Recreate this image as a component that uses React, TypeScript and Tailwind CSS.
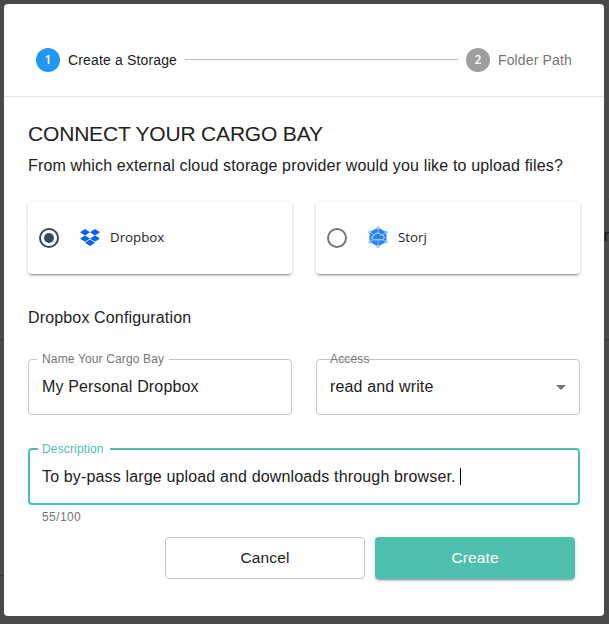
import type { ReactNode } from "react";

function Step({ n, label, active = false }: { n: number; label: string; active?: boolean }) {
  return (
    <div className="flex items-center gap-2">
      <span
        className={`flex h-6 w-6 items-center justify-center rounded-full font-['Open_Sans',sans-serif] text-xs font-semibold text-white ${
          active ? "bg-[#2196f3]" : "bg-[#9e9e9e]"
        }`}
      >
        {n}
      </span>
      <span
        className={`whitespace-nowrap text-sm leading-5 tracking-[0.15px] ${active ? "text-[#212121]" : "text-[#757575]"}`}
      >
        {label}
      </span>
    </div>
  );
}

function DropboxLogo() {
  return (
    <svg className="h-[17px] w-5" viewBox="0 0 20 17" fill="#0061ff">
      <path d="M5 0l5 3.2-5 3.2-5-3.2zM15 0l5 3.2-5 3.2-5-3.2zM5 6.4l5 3.2-5 3.2-5-3.2zM15 6.4l5 3.2-5 3.2-5-3.2zM5 13.8l5-3.2 5 3.2-5 3.2z" />
    </svg>
  );
}

function StorjLogo() {
  return (
    <svg className="h-[22px] w-5" viewBox="0 0 20 22">
      <path d="M10 1.500l8.500 4.700v9.600L10 20.500l-8.500-4.700V6.200z" fill="#2683ff" />
      <path
        d="M10 1.500v6M1.500 6.200l5 3M18.500 6.200l-5 3M1.500 15.800l4-2.300M18.500 15.800l-4-2.300M10 14v6.500"
        stroke="#a8d0ff"
        strokeWidth="0.8"
      />
      <path
        d="M5.500 13.800a2.200 2.200 0 01.4-4.300 3.800 3.800 0 016.800-.6 2.500 2.500 0 011.800 4.900z"
        fill="#2683ff"
        stroke="#d9eaff"
        strokeWidth="1"
      />
      <g fill="#9ccaff">
        <circle cx="10" cy="1.700" r="1.600" />
        <circle cx="1.700" cy="6" r="1.600" />
        <circle cx="18.300" cy="6" r="1.600" />
        <circle cx="1.700" cy="16" r="1.600" />
        <circle cx="18.300" cy="16" r="1.600" />
        <circle cx="10" cy="20.300" r="1.600" />
      </g>
    </svg>
  );
}

function Provider({ name, logo, checked = false }: { name: string; logo: ReactNode; checked?: boolean }) {
  return (
    <label className="flex h-18 items-center rounded bg-white pl-[11px] shadow-[0_3px_1px_-2px_rgba(0,0,0,0.2),0_2px_2px_0_rgba(0,0,0,0.14),0_1px_5px_0_rgba(0,0,0,0.12)]">
      <span
        className={`flex h-5 w-5 items-center justify-center rounded-full border-2 ${
          checked ? "border-[#34495e]" : "border-[#757575]"
        }`}
      >
        {checked && <span className="h-2.5 w-2.5 rounded-full bg-[#34495e]" />}
      </span>
      <span className="ml-[21px] -mt-0.5 flex w-5 justify-center">{logo}</span>
      <span className="-mt-0.5 ml-2.5 font-['Open_Sans',sans-serif] text-[13.3px] leading-5 text-[#212121]">{name}</span>
    </label>
  );
}

export default function App() {
  return (
    <div className="relative h-[624px] w-[609px] overflow-hidden bg-[#4a4a4a] p-1 font-['Liberation_Sans',Arial,sans-serif] text-[#212121]">
      <div className="absolute inset-x-0 top-[199px] h-px bg-[#434343]" />
      <div className="absolute inset-x-0 top-[339px] h-px bg-[#383838]" />
      <div className="absolute left-0 top-[435px] h-px w-1 bg-[#434343]" />
      <div className="absolute left-0 top-[575px] h-px w-1 bg-[#383838]" />
      <div className="absolute right-0 top-[226px] text-base leading-5 text-[#0b1420]">or</div>

      <div className="relative h-[612px] w-[600px] rounded bg-white">
        <header className="flex h-[93px] items-center border-b border-[#e5e5e5] px-8 pt-5">
          <Step n={1} label="Create a Storage" active />
          <div className="mx-2 -mt-px h-px flex-1 bg-[#bdbdbd]" />
          <Step n={2} label="Folder Path" />
        </header>

        <main className="px-6 pt-[21px]">
          <h1 className="whitespace-nowrap text-[21px] leading-8 tracking-[-0.18px]">CONNECT YOUR CARGO BAY</h1>
          <p className="mt-1 whitespace-nowrap text-base leading-6 tracking-[0.15px]">
            From which external cloud storage provider would you like to upload files?
          </p>

          <div className="mt-6 grid grid-cols-2 gap-6">
            <Provider name="Dropbox" logo={<DropboxLogo />} checked />
            <Provider name="Storj" logo={<StorjLogo />} />
          </div>

          <h2 className="mt-8 text-base leading-6 tracking-[0.15px]">Dropbox Configuration</h2>

          <div className="mt-[29px] grid grid-cols-2 gap-6">
            <div className="relative flex h-14 items-center rounded border border-[#c4c4c4] px-[13px] text-base tracking-[0.15px]">
              <span className="absolute -top-2 left-2 bg-white px-[5px] text-xs leading-[14px] tracking-[0.15px] text-[#757575]">
                Name Your Cargo Bay
              </span>
              My Personal Dropbox
            </div>
            <div className="relative flex h-14 items-center justify-between rounded border border-[#c4c4c4] px-[13px] text-base tracking-[0.15px]">
              <span className="absolute -top-2 left-[13px] text-xs leading-[14px] tracking-[0.15px] text-[#757575]">
                Access
              </span>
              read and write
              <svg className="h-[5px] w-2.5" viewBox="0 0 10 5" fill="#757575">
                <path d="M0 0h10L5 5z" />
              </svg>
            </div>
          </div>

          <div className="relative mt-[33px] flex h-[57px] items-center rounded border-2 border-[#4ebfac] px-3 text-base tracking-[0.15px]">
            <span className="absolute -top-2 left-2 bg-white pl-1 pr-1.5 text-xs leading-[14px] tracking-[0.15px] text-[#4ebfac]">
              Description
            </span>
            <span className="whitespace-pre">To by-pass large upload and downloads through browser. </span>
            <span className="h-[17px] w-px bg-black" />
          </div>
          <p className="ml-3.5 mt-1 text-xs leading-4 tracking-[0.4px] text-[#757575]">55/100</p>

          <div className="mt-3 flex justify-end gap-2.5 pr-[5px] text-[15.5px] tracking-[0.12px]">
            <button className="h-[42px] w-[200px] rounded border border-[#c4c4c4]">Cancel</button>
            <button className="h-[42px] w-[200px] rounded bg-[#4ec0ad] text-white shadow-[0_3px_1px_-2px_rgba(0,0,0,0.2),0_2px_2px_0_rgba(0,0,0,0.14),0_1px_5px_0_rgba(0,0,0,0.12)]">
              Create
            </button>
          </div>
        </main>
      </div>
    </div>
  );
}
